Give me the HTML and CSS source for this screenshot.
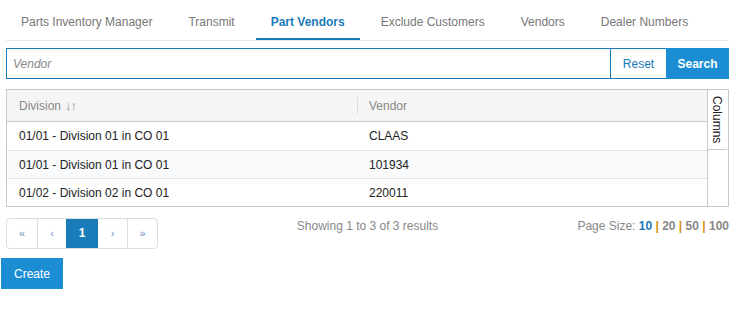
FILE: index.html
```html
<!DOCTYPE html>
<html lang="en">
<head>
    <meta charset="UTF-8">
    <title>Part Vendors</title>
    <link rel="stylesheet" href="styles.css">
</head>
<body>

    <div class="page">
        <ul class="tabs">
            <li class="tab">Parts Inventory Manager</li>
            <li class="tab">Transmit</li>
            <li class="tab active">Part Vendors</li>
            <li class="tab">Exclude Customers</li>
            <li class="tab">Vendors</li>
            <li class="tab">Dealer Numbers</li>
        </ul>

        <div class="search-row">
            <input class="search-input" type="text" placeholder="Vendor">
            <button class="btn-reset">Reset</button>
            <button class="btn-search">Search</button>
        </div>

        <div class="grid">
            <div class="grid-main">
                <div class="grid-row grid-head">
                    <div class="cell">Division <span class="sort">&#8595;&#8593;</span></div>
                    <div class="cell cell-split">Vendor</div>
                </div>
                <div class="grid-row">
                    <div class="cell">01/01 - Division 01 in CO 01</div>
                    <div class="cell">CLAAS</div>
                </div>
                <div class="grid-row alt">
                    <div class="cell">01/01 - Division 01 in CO 01</div>
                    <div class="cell">101934</div>
                </div>
                <div class="grid-row">
                    <div class="cell">01/02 - Division 02 in CO 01</div>
                    <div class="cell">220011</div>
                </div>
            </div>
            <div class="grid-side">
                <div class="columns-toggle">Columns</div>
            </div>
        </div>

        <div class="footer">
            <ul class="pager">
                <li class="edge">&laquo;</li>
                <li>&lsaquo;</li>
                <li class="current">1</li>
                <li>&rsaquo;</li>
                <li class="edge">&raquo;</li>
            </ul>
            <div class="showing">Showing 1 to 3 of 3 results</div>
            <div class="page-size">
                Page Size:
                <b class="on">10</b> <b class="sep">|</b> <b>20</b> <b class="sep">|</b> <b>50</b> <b class="sep">|</b> <b>100</b>
            </div>
        </div>
    </div>

    <button class="btn-create">Create</button>

</body>
</html>
```

FILE: styles.css
```css
body {
    margin: 0;
    font-family: "Liberation Sans", Arial, sans-serif;
    font-size: 12px;
    color: #222;
    background: #fff;
}
.page {
    width: 723px;
    margin-left: 6px;
}
/* Tabs */
.tabs {
    display: flex;
    gap: 6px;
    list-style: none;
    margin: 0;
    padding: 0;
    border-bottom: 1px solid #e8e8e8;
}
.tab {
    flex-shrink: 0;
    white-space: nowrap;
    padding: 15px 15px 8px;
    line-height: 15px;
    color: #777;
    border-bottom: 2px solid transparent;
}
.tab.active {
    color: #1a7bb9;
    font-weight: bold;
    border-bottom-color: #1a7bb9;
}
/* Search bar */
.search-row {
    display: flex;
    margin-top: 7px;
    height: 31px;
}
.search-input {
    flex: 1;
    margin: 0;
    border: 1px solid #1a7bb9;
    border-right: none;
    padding: 0 6px;
    font-family: inherit;
    font-size: 12px;
    outline: none;
}
.search-input::placeholder {
    color: #888;
    font-style: italic;
}
.btn-reset, .btn-search {
    margin: 0;
    padding: 0;
    font-family: inherit;
    font-size: 12px;
    cursor: pointer;
}
.btn-reset {
    width: 56px;
    background: #fff;
    color: #1a7bb9;
    border: 1px solid #1a7bb9;
    border-right: none;
}
.btn-search {
    width: 63px;
    background: #1b8dd3;
    color: #fff;
    font-weight: bold;
    border: none;
}
/* Grid */
.grid {
    display: flex;
    margin-top: 10px;
    border: 1px solid #c9c9c9;
}
.grid-main {
    flex: 1;
}
.grid-row {
    display: flex;
    box-sizing: border-box;
    height: 28px;
    border-top: 1px solid #e3e3e3;
}
.grid-row.alt {
    background: #f8fafc;
}
.grid-head {
    height: 32px;
    border-top: none;
    border-bottom: 1px solid #c9c9c9;
    background: #f5f5f5;
    color: #888;
}
.grid-head + .grid-row {
    height: 28px;
    border-top: none;
}
.cell {
    display: flex;
    align-items: center;
    padding: 0 12px;
}
.cell:first-child {
    width: 326px;
}
.cell-split {
    position: relative;
}
.cell-split::before {
    content: "";
    position: absolute;
    left: 0;
    top: 7px;
    bottom: 7px;
    border-left: 1px solid #dcdcdc;
}
.sort {
    margin-left: 4px;
    color: #999;
    font-size: 13px;
    letter-spacing: -1px;
}
.grid-side {
    width: 20px;
    border-left: 1px solid #c9c9c9;
}
.columns-toggle {
    box-sizing: border-box;
    height: 60px;
    border-bottom: 1px solid #c9c9c9;
    writing-mode: vertical-rl;
    padding-top: 6px;
    padding-right: 2px;
    font-size: 12px;
    color: #222;
    line-height: 17px;
}
/* Footer */
.footer {
    display: grid;
    grid-template-columns: 1fr auto 1fr;
    margin-top: 11px;
}
.pager {
    display: flex;
    list-style: none;
    margin: 0;
    padding: 0;
    justify-self: start;
    border: 1px solid #ddd;
    border-radius: 4px;
    overflow: hidden;
}
.pager li {
    box-sizing: border-box;
    height: 29px;
    line-height: 29px;
    width: 29px;
    text-align: center;
    color: #6f8fb3;
    font-size: 11px;
    border-left: 1px solid #ddd;
}
.pager li.edge {
    width: 30px;
}
.pager li:first-child {
    border-left: none;
}
.pager li.current {
    width: 32px;
    background: #1a7bb9;
    color: #fff;
    font-weight: bold;
    font-size: 12px;
    border-left: none;
}
.pager li.current + li {
    border-left: none;
}
.showing {
    color: #888;
    line-height: 17px;
}
.page-size {
    justify-self: end;
    color: #888;
    line-height: 17px;
}
.page-size b {
    color: #888;
}
.page-size b.on {
    color: #1a7bb9;
}
.page-size b.sep {
    color: #d4900a;
}
.btn-create {
    display: block;
    margin: 9px 0 0 1px;
    width: 62px;
    height: 31px;
    padding: 0;
    background: #1b8dd3;
    color: #fff;
    border: none;
    font-family: "Liberation Sans", Arial, sans-serif;
    font-size: 12px;
    cursor: pointer;
}
```
